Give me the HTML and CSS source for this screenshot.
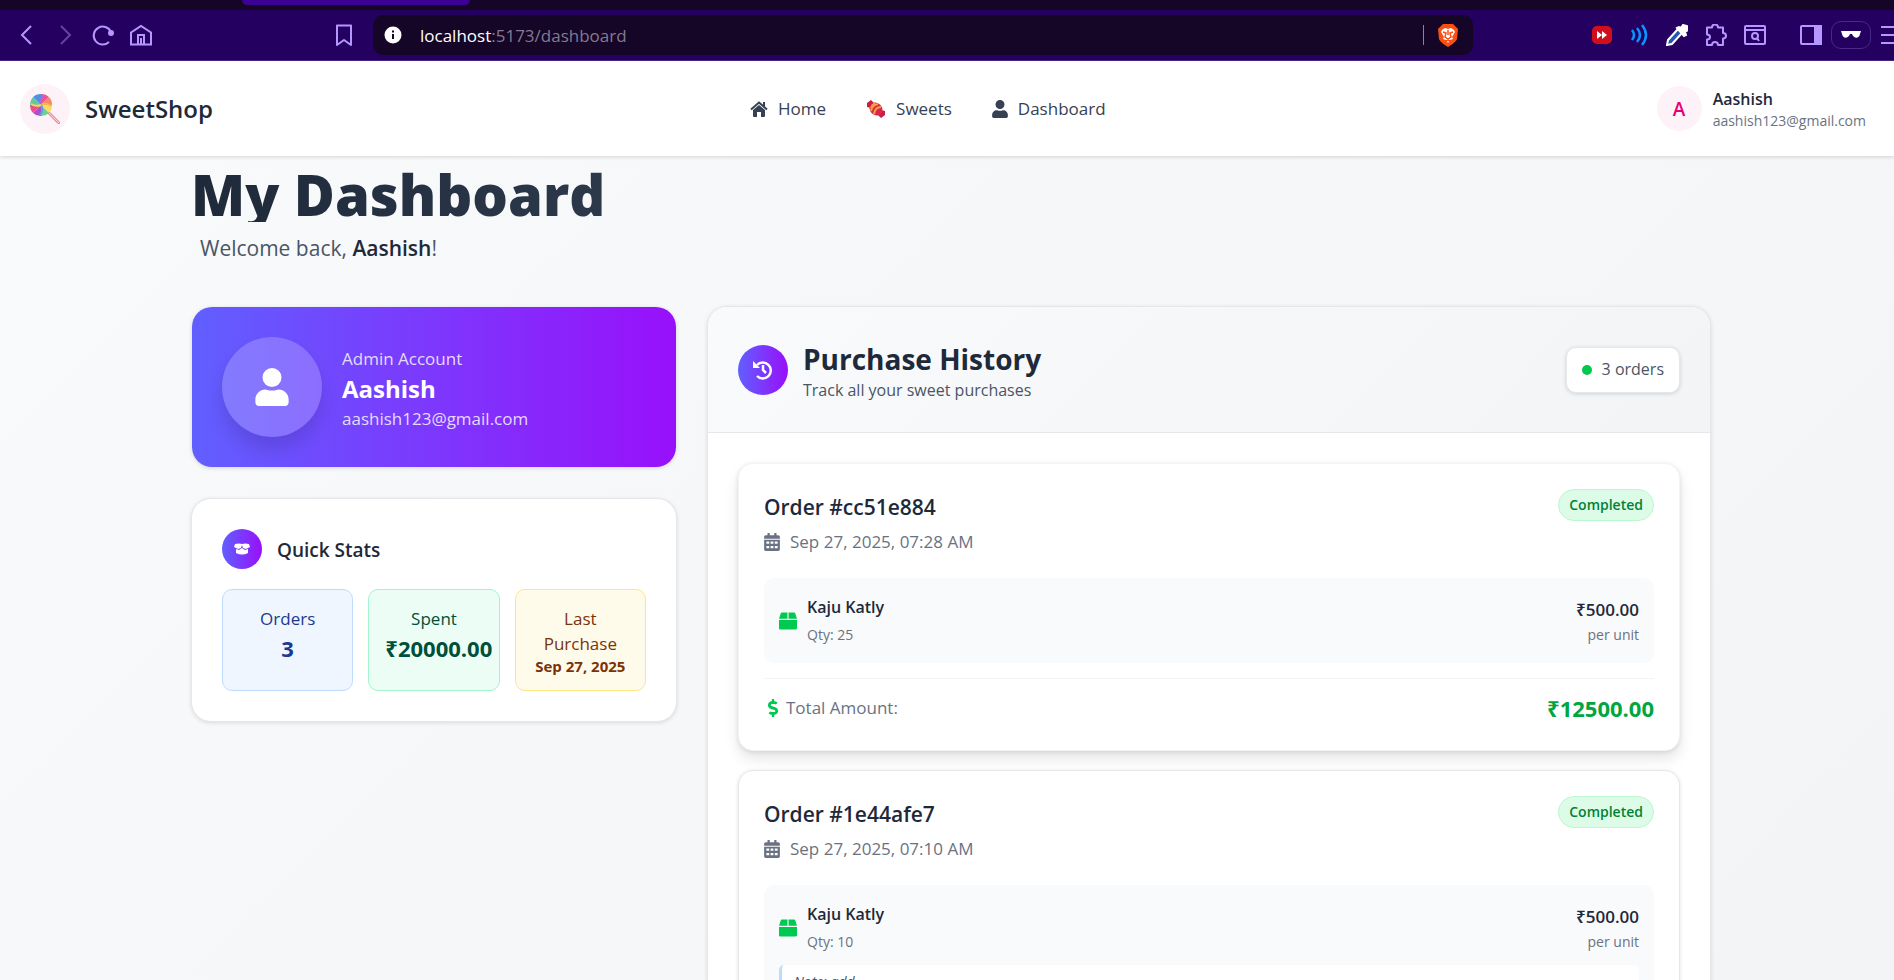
FILE: index.html
```html
<!DOCTYPE html>
<html lang="en">
<head>
<meta charset="utf-8">
<meta name="viewport" content="width=device-width, initial-scale=1">
<title>SweetShop - My Dashboard</title>
<link rel="stylesheet" href="styles.css">
</head>
<body>
<svg class="defs" aria-hidden="true">
  <symbol id="i-user" viewBox="0 0 448 512"><path fill="currentColor" d="M224 256a128 128 0 1 0 0-256 128 128 0 1 0 0 256zM314 288c-20 0-30 16-90 16s-70-16-90-16C60 288 0 348 0 422v42c0 26 22 48 48 48h352c26 0 48-22 48-48v-42c0-74-60-134-134-134z"/></symbol>
  <symbol id="i-calendar" viewBox="0 0 448 512"><path fill="currentColor" fill-rule="evenodd" d="M0 464c0 26 22 48 48 48h352c26 0 48-22 48-48V192H0zM64 240h80v64H64zm120 0h80v64h-80zm120 0h80v64h-80zM64 368h80v64H64zm120 0h80v64h-80zm120 0h80v64h-80z"/><path fill="currentColor" d="M400 64h-48V12c0-7-5-12-12-12h-40c-7 0-12 5-12 12v52H160V12c0-7-5-12-12-12h-40c-7 0-12 5-12 12v52H48C22 64 0 86 0 112v48h448v-48c0-26-22-48-48-48z"/></symbol>
  <symbol id="i-box" viewBox="0 0 512 512"><path fill="currentColor" d="M509 184 463 44C456 24 438 16 418 16H272v176h239zM240 16H94C74 16 56 24 49 44L3 184l-2 8h239zM0 224v240c0 26 22 32 48 32h416c26 0 48-6 48-32V224z"/></symbol>
  <symbol id="i-dollar" viewBox="0 0 288 512"><path fill="currentColor" d="m209 233-108-31c-12-4-21-16-21-29 0-17 13-30 30-30h66c12 0 24 4 34 11 6 4 15 3 20-2l35-34c7-7 6-19-2-25-24-19-54-29-85-29V16c0-9-7-16-16-16h-36c-9 0-16 7-16 16v48h-2C48 64-5 118 1 184c4 47 40 84 85 98l103 30c12 4 21 16 21 29 0 17-13 30-30 30h-66c-12 0-24-4-34-11-6-4-15-3-20 2l-35 34c-7 7-6 19 2 25 24 19 54 29 85 29v46c0 9 7 16 16 16h36c9 0 16-7 16-16v-46c47-1 91-29 106-73 21-61-15-126-77-144z"/></symbol>
</svg>

<div class="tabs"><span class="active-tab"></span></div>
<div class="toolbar">
  <div class="tools-left">
    <button class="tool" aria-label="Back"><svg width="22" height="22" viewBox="0 0 22 22"><path d="M15 2 6 11l9 9"/></svg></button>
    <button class="tool dim" aria-label="Forward"><svg width="22" height="22" viewBox="0 0 22 22"><path d="m7 2 9 9-9 9"/></svg></button>
    <button class="tool" aria-label="Reload"><svg width="22" height="22" viewBox="0 0 22 22"><path d="M17 18A9 9 0 1 1 19 8"/><circle cx="19" cy="9" r="2" class="solid"/></svg></button>
    <button class="tool" aria-label="Home page"><svg width="22" height="22" viewBox="0 0 22 22"><path d="M1 20.500V8.500L11 2l10 6.500v12zM8 20v-9h6v9M11 20v-6"/></svg></button>
  </div>
  <button class="tool" aria-label="Bookmark"><svg width="22" height="22" viewBox="0 0 22 22"><path d="M4 1.500h14v19.500l-7-5-7 5z" stroke-linejoin="round"/></svg></button>
  <div class="address">
    <svg width="18" height="18" viewBox="0 0 18 18"><circle cx="9" cy="9" r="8.500" fill="#fff"/><path d="M9 8v5M9 4.500v2" stroke="#150526" stroke-width="2"/></svg>
    <span class="url"><b>localhost</b>:5173/dashboard</span>
    <span class="bar"></span>
    <svg width="22" height="24" viewBox="0 0 22 24"><path fill="#fb4f14" d="M6 1h10l3 3 2 2-1 10c-1 3-6 6-9 8-3-2-8-5-9-8L1 6l2-2z"/><path fill="#fff" d="m5 7 3-2 3 1 3-1 3 2 1 2-3 5 1 2-3 1-2 3-2-3-3-1 1-2-3-5z"/><path stroke="#fb4f14" stroke-width="1.500" fill="none" d="m6 9 3 1-1 4 3 2 3-2-1-4 3-1M11 7v5M9 18l2-1 2 1"/></svg>
  </div>
  <div class="tools-right">
    <button class="tool" aria-label="Video speed"><svg width="20" height="22" viewBox="0 0 20 22"><rect y="2" width="20" height="18" rx="5" fill="#cf0f1c" stroke="none"/><path d="m5 7 5 4-5 4zm5 0 5 4-5 4z" fill="#fff" stroke="none"/></svg></button>
    <button class="tool" aria-label="Volume"><svg width="20" height="22" viewBox="0 0 20 22"><path d="M3 6q4 5 0 10M8 4q6 7 0 14M13 1q8 10 0 20" stroke="#0a94ff" stroke-width="2.500"/></svg></button>
    <button class="tool" aria-label="Colour picker"><svg width="22" height="22" viewBox="0 0 22 22"><path d="M12 5 2 16l-1 5 5-1L16 9" fill="#2456b8" stroke="#fff"/><path d="m11 4 2-1 2 1 2-3 4 1 1 4-3 2 1 3-2 1z" fill="#fff" stroke="#fff"/></svg></button>
    <button class="tool" aria-label="Extensions"><svg width="22" height="22" viewBox="0 0 22 22"><path stroke-linejoin="round" d="M2 3.500h5c0-4 6-4 6 0h5V9c4 0 4 5.500 0 5.500V21h-5c0-4-6-4-6 0H2v-5.500c4 0 4-5 0-5z"/></svg></button>
    <button class="tool" aria-label="Search page"><svg width="22" height="22" viewBox="0 0 22 22"><rect x="1" y="2" width="20" height="18" rx="1"/><path d="M1 6h20M13 14l2 3"/><circle cx="11" cy="12" r="3"/></svg></button>
    <span class="split"></span>
    <button class="tool" aria-label="Sidebar"><svg width="22" height="22" viewBox="0 0 22 22"><rect x="1" y="2" width="20" height="18" rx="1"/><path d="M15 2h6v18h-6z" class="solid"/></svg></button>
    <button class="tool pill" aria-label="Private mode"><svg width="20" height="10" viewBox="0 0 20 10"><path d="M0 1h20l-1 3c-1 5-6 5-8 0H9C7 9 2 9 1 4z" fill="#fff" stroke="none"/></svg></button>
    <button class="tool menu" aria-label="Menu"><svg width="22" height="22" viewBox="0 0 22 22"><path d="M1 3h20M1 11h20M1 19h20"/></svg></button>
  </div>
</div>

<header class="site-header">
  <div class="brand">
    <span class="logo"><svg width="30" height="30" viewBox="0 0 30 30"><path d="m19 19 10 10" stroke="#e98fae" stroke-width="3" stroke-linecap="round"/><path d="m19 19 10 10" stroke="#fbd3c8"/><g><path fill="#f0568c" d="M11 11V0a11 11 0 0 1 8 3z"/><path fill="#f58a6b" d="m11 11 8-8a11 11 0 0 1 3 8z"/><path fill="#f9dc5c" d="M11 11h11a11 11 0 0 1-3 8z"/><path fill="#6fd08c" d="m11 11 8 8a11 11 0 0 1-8 3z"/><path fill="#b04fc4" d="M11 11v11a11 11 0 0 1-8-3z"/><path fill="#ef4b8e" d="m11 11-8 8a11 11 0 0 1-3-8z"/><path fill="#62c99b" d="M11 11H0a11 11 0 0 1 3-8z"/><path fill="#4f8fe8" d="M11 11 3 3a11 11 0 0 1 8-3z"/><path fill="none" stroke="#a868e0" stroke-width="2" d="M11 11q-2-5 3-10"/><path fill="none" stroke="#f7b84b" stroke-width="2" d="M11 11q5-3 10 1"/><path fill="none" stroke="#5a9df0" stroke-width="2" d="M11 11q3 5-1 10"/><path fill="none" stroke="#f5d75a" stroke-width="2" d="M11 11q-5 2-10-1"/></g></svg></span>
    <span class="brand-name">SweetShop</span>
  </div>
  <nav class="site-nav">
    <a href="#"><svg width="18" height="16" viewBox="0 0 18 16"><path fill="#364153" d="m9 4 6 5v6q0 1-1 1h-3v-5H7v5H4q-1 0-1-1V9z"/><path fill="none" stroke="#364153" stroke-width="2" d="m1 8.500 8-7 8 7M14 1v4"/></svg>Home</a>
    <a href="#"><svg class="candy" width="20" height="20" viewBox="0 0 20 20"><path fill="#c81e46" d="m1 4 4-3 3 3-3 5-4-1zM19 16l-4 3-3-3 3-5 4 1z"/><ellipse cx="10" cy="10" rx="7" ry="6" transform="rotate(45 10 10)" fill="#d9264f"/><path fill="none" stroke="#f5a142" stroke-width="2" d="M5 12Q6 6 12 5M8 15q1-7 7-7M5 9q1-3 4-5"/></svg>Sweets</a>
    <a href="#"><svg width="16" height="18"><use href="#i-user"/></svg>Dashboard</a>
  </nav>
  <div class="account">
    <span class="initial">A</span>
    <div class="account-text"><div class="account-name">Aashish</div><div class="account-mail">aashish123@gmail.com</div></div>
  </div>
</header>

<main class="page">
  <h1>My Dashboard</h1>
  <p class="welcome">Welcome back, <strong>Aashish</strong>!</p>
  <div class="columns">
    <div class="side">
      <section class="profile">
        <span class="portrait"><svg width="34" height="38"><use href="#i-user"/></svg></span>
        <div class="profile-body">
          <div class="profile-text">Admin Account</div>
          <div class="profile-name">Aashish</div>
          <div class="profile-text">aashish123@gmail.com</div>
        </div>
      </section>
      <section class="stats">
        <div class="stats-head">
          <span class="stats-icon"><svg width="16" height="12" viewBox="0 0 16 12"><path fill="#fff" d="M1 1q4-1 7 0 3-1 7 0l1 3-4 2-3-1-1-3-1 3-3 1-4-2z"/><path fill="#fff" d="m2 6 3 1 3-2 3 2 3-1v4q-6 3-12 0z"/></svg></span>
          <h2>Quick Stats</h2>
        </div>
        <div class="tiles">
          <div class="tile blue"><div class="tile-label">Orders</div><div class="tile-value">3</div></div>
          <div class="tile green"><div class="tile-label">Spent</div><div class="tile-value">₹20000.00</div></div>
          <div class="tile amber"><div class="tile-label">Last Purchase</div><div class="tile-date">Sep 27, 2025</div></div>
        </div>
      </section>
    </div>

    <section class="history">
      <div class="history-head">
        <span class="history-icon"><svg width="20" height="20" viewBox="0 0 20 20" fill="none" stroke="#fff" stroke-width="2.500"><path d="M4 5a8 8 0 1 1 0 11M10 5v5l3 3"/><path stroke="none" d="M0 1v7h7z" fill="#fff"/></svg></span>
        <div class="history-title"><h2>Purchase History</h2><p>Track all your sweet purchases</p></div>
        <span class="count"><i class="dot"></i>3 orders</span>
      </div>
      <div class="orders">
        <article class="order raised">
          <div class="order-head">
            <div><h3>Order #cc51e884</h3><div class="date"><svg width="16" height="18"><use href="#i-calendar"/></svg>Sep 27, 2025, 07:28 AM</div></div>
            <span class="status">Completed</span>
          </div>
          <div class="item">
            <div class="item-row">
              <svg class="box" width="18" height="18"><use href="#i-box"/></svg>
              <div class="item-name"><div class="strong">Kaju Katly</div><div class="small qty">Qty: 25</div></div>
              <div class="price"><div class="strong">₹500.00</div><div class="small">per unit</div></div>
            </div>
          </div>
          <div class="total">
            <svg class="dollar" width="18" height="18"><use href="#i-dollar"/></svg>
            <span>Total Amount:</span>
            <span class="amount">₹12500.00</span>
          </div>
        </article>
        <article class="order">
          <div class="order-head">
            <div><h3>Order #1e44afe7</h3><div class="date"><svg width="16" height="18"><use href="#i-calendar"/></svg>Sep 27, 2025, 07:10 AM</div></div>
            <span class="status">Completed</span>
          </div>
          <div class="item">
            <div class="item-row">
              <svg class="box" width="18" height="18"><use href="#i-box"/></svg>
              <div class="item-name"><div class="strong">Kaju Katly</div><div class="small qty">Qty: 10</div></div>
              <div class="price"><div class="strong">₹500.00</div><div class="small">per unit</div></div>
            </div>
            <div class="note">Note: add</div>
          </div>
        </article>
      </div>
    </section>
  </div>
</main>
</body>
</html>
```
FILE: styles.css
```css
* { box-sizing: border-box; }
html, body { height: 100%; }
body {
  margin: 0;
  height: 100vh;
  display: flex;
  flex-direction: column;
  overflow: hidden;
  font-family: "Open Sans", "Noto Sans", sans-serif;
  font-size: 17px;
  line-height: 25px;
  color: #1e2939;
  background: linear-gradient(135deg, #f9fafb, #f3f4f6);
}
h1, h2, h3, p { margin: 0; }
svg { display: block; flex: none; }
.defs { position: absolute; width: 0; height: 0; }

/* Browser frame */
.tabs { flex: none; height: 10px; background: #150526; padding-left: 242px; }
.active-tab { display: block; width: 228px; height: 5px; background: #3c0094; border-radius: 0 0 8px 8px; }
.toolbar {
  flex: none;
  display: flex;
  align-items: center;
  height: 51px;
  padding-left: 16px;
  background: #240060;
  border-bottom: 1px solid #4b2788;
}
.tool { border: 0; padding: 0; background: none; }
.tool svg { fill: none; stroke: #b697ff; stroke-width: 2; }
.tool .solid { fill: #b697ff; }
.tool.dim svg { stroke: #6b3fa8; }
.tools-left { display: flex; gap: 16px; width: 317px; }
.address {
  flex: 1;
  display: flex;
  align-items: center;
  height: 40px;
  margin-left: 18px;
  padding: 0 14px 0 11px;
  background: #150526;
  border-radius: 10px;
}
.url { flex: 1; margin-left: 18px; color: #837b90; }
.url b { color: #fff; font-weight: 400; }
.bar { width: 1px; height: 20px; margin-right: 13px; background: #8a8296; }
.tools-right { display: flex; align-items: center; gap: 17px; width: 421px; padding-left: 119px; overflow: hidden; }
.split { width: 2px; height: 22px; background: #150526; }
.pill {
  display: flex;
  flex: none;
  align-items: center;
  justify-content: center;
  width: 40px;
  height: 28px;
  margin: 0 -8px;
  border: 1px solid #4b2788;
  border-radius: 10px;
}

/* Site header */
.site-header {
  flex: none;
  display: flex;
  justify-content: space-between;
  align-items: center;
  height: 95px;
  padding: 0 28px 0 20px;
  background: #fff;
  box-shadow: 0 1px 4px rgba(0, 0, 0, .15);
  z-index: 1;
}
.brand, .account, .site-nav, .site-nav a { display: flex; align-items: center; }
.brand { gap: 15px; }
.logo { display: grid; place-items: center; width: 50px; height: 50px; border-radius: 50%; background: #fdf2f8; }
.brand-name { font-size: 24px; font-weight: 600; }
.site-nav { gap: 40px; padding-right: 14px; }
.site-nav a { gap: 10px; color: #364153; text-decoration: none; }
.account { justify-content: flex-end; gap: 11px; line-height: 22px; }
.initial {
  display: grid;
  place-items: center;
  width: 45px;
  height: 45px;
  border-radius: 50%;
  background: #fdf2f8;
  color: #e60076;
  font-size: 19px;
  font-weight: 600;
}
.account-text { padding-top: 2px; }
.account-name { font-size: 16px; font-weight: 600; }
.account-mail { font-size: 14px; color: #6a7282; }

/* Page */
.page { flex: 1; min-height: 0; width: 100%; max-width: 1600px; margin: 0 auto; padding: 8px 36px 0 44px; }
h1 {
  width: fit-content;
  height: 58px;
  font-size: 56px;
  font-weight: 800;
  line-height: 60px;
  background: linear-gradient(90deg, #1e2939, #2c394b);
  background-clip: text;
  color: transparent;
}
.welcome { padding: 10px 0 0 9px; font-size: 21px; line-height: 32px; color: #4a5565; }
.welcome strong { font-weight: 600; color: #1e2939; }
.columns { display: grid; grid-template-columns: 486fr 1004fr; gap: 30px; align-items: start; margin-top: 42px; }
.side { display: flex; flex-direction: column; gap: 31px; }
.profile {
  display: flex;
  align-items: center;
  gap: 20px;
  margin: 1px 1px 0;
  padding: 30px;
  border-radius: 20px;
  background: linear-gradient(90deg, #615fff, #9810fa);
  box-shadow: 0 1px 4px rgba(0, 0, 0, .15);
  line-height: 30px;
}
.profile-body { padding-top: 3px; }
.portrait {
  display: grid;
  place-items: center;
  width: 100px;
  height: 100px;
  border-radius: 50%;
  color: #fff;
  background: rgba(255, 255, 255, .2);
  box-shadow: 0 12px 18px rgba(0, 0, 0, .12);
}
.profile-text { color: rgba(255, 255, 255, .82); }
.profile-name { color: #fff; font-size: 24px; font-weight: 700; }
.stats {
  padding: 30px;
  border: 1px solid #e5e7eb;
  border-radius: 20px;
  background: #fff;
  box-shadow: 0 1px 4px rgba(0, 0, 0, .12);
}
.stats-head { display: flex; align-items: center; gap: 15px; margin-bottom: 20px; }
.stats-icon, .history-icon { display: grid; place-items: center; flex: none; border-radius: 50%; background: linear-gradient(90deg, #615fff, #9810fa); }
.stats-icon { width: 40px; height: 40px; }
.stats-head h2 { padding-top: 2px; font-size: 19px; font-weight: 600; }
.tiles { display: grid; grid-template-columns: repeat(3, minmax(0, 1fr)); gap: 15px; }
.tile { height: 102px; padding: 16px; border: 1px solid; border-radius: 10px; text-align: center; }
.tile-label { font-weight: 500; }
.tile-value { font-size: 22px; font-weight: 700; line-height: 34px; }
.tile-date { margin: 0 -8px; font-size: 15px; font-weight: 700; line-height: 20px; white-space: nowrap; }
.blue { background: #eff6ff; border-color: #bedbff; color: #1c398e; }
.green { background: #ecfdf5; border-color: #a4f4cf; color: #004f3b; }
.amber { background: #fffbeb; border-color: #fee685; color: #7b3306; }

/* Purchase history */
.history { border: 1px solid #e5e7eb; border-radius: 20px; background: #fff; box-shadow: 0 1px 4px rgba(0, 0, 0, .12); overflow: hidden; }
.history-head {
  display: flex;
  align-items: center;
  gap: 15px;
  height: 126px;
  padding: 0 30px;
  border-bottom: 1px solid #e5e7eb;
  background: linear-gradient(135deg, #f9fafb, #f3f4f6);
}
.history-icon { width: 50px; height: 50px; }
.history-title { flex: 1; padding-top: 3px; }
.history-title h2 { font-size: 28px; font-weight: 700; line-height: 38px; }
.history-title p { font-size: 16px; color: #4a5565; }
.count {
  display: flex;
  align-items: center;
  gap: 10px;
  height: 46px;
  padding: 0 15px;
  border: 1px solid #e5e7eb;
  border-radius: 10px;
  background: #fff;
  color: #4a5565;
  font-size: 16px;
  box-shadow: 0 1px 4px rgba(0, 0, 0, .15);
}
.dot { width: 10px; height: 10px; border-radius: 50%; background: #00c950; }
.orders { display: flex; flex-direction: column; gap: 19px; padding: 30px; }
.order { padding: 25px; border: 1px solid #e5e7eb; border-radius: 15px; background: #fff; box-shadow: 0 1px 4px rgba(0, 0, 0, .12); }
.raised { border-color: #f3f4f6; box-shadow: 0 8px 14px rgba(0, 0, 0, .1), 0 1px 4px rgba(0, 0, 0, .1); }
.order-head { display: flex; justify-content: space-between; align-items: flex-start; margin-bottom: 19px; }
.order-head h3 { font-size: 21px; font-weight: 600; line-height: 36px; }
.date { display: flex; align-items: center; gap: 10px; line-height: 34px; color: #6a7282; }
.status { padding: 0 10px; border: 1px solid #b9f8cf; border-radius: 16px; background: #dcfce7; color: #008236; font-size: 14px; font-weight: 600; line-height: 30px; }
.item { padding: 15px; border-radius: 10px; background: #f9fafb; }
.item-row { display: flex; align-items: center; gap: 10px; }
.box, .dollar { color: #00c950; }
.item-name { flex: 1; }
.price { text-align: right; }
.strong { font-size: 16px; font-weight: 600; line-height: 28px; }
.price .strong { font-size: 17px; }
.small { font-size: 14px; color: #6a7282; line-height: 22px; }
.small.qty { line-height: 27px; }
.note { margin-top: 10px; padding: 4px 12px; border-left: 3px solid #bedbff; border-radius: 5px; background: #fff; font-size: 14px; font-style: italic; color: #4a5565; }
.total { display: flex; align-items: center; gap: 4px; margin-top: 15px; padding-top: 12px; border-top: 1px solid #f3f4f6; line-height: 34px; color: #6a7282; }
.amount { margin-left: auto; font-size: 22px; font-weight: 700; color: #00a63e; }
```
